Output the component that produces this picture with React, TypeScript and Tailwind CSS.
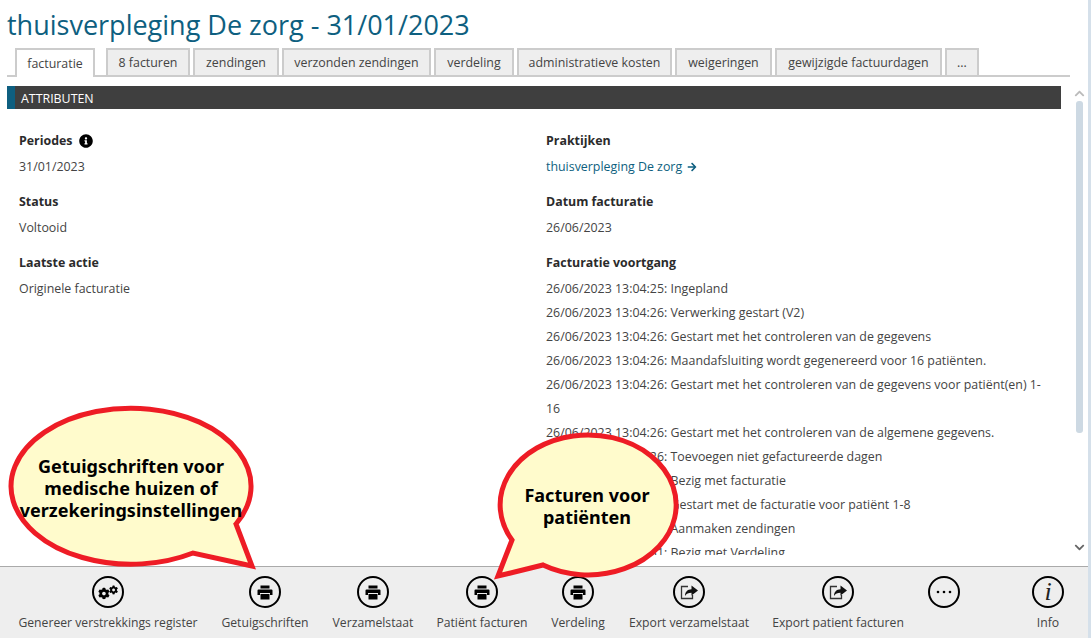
import { FaCog, FaInfoCircle, FaArrowRight, FaChevronUp, FaChevronDown } from 'react-icons/fa';

const tabs = [
  { label: '8 facturen', width: 'w-[84px]' },
  { label: 'zendingen', width: 'w-[86px]' },
  { label: 'verzonden zendingen', width: 'w-[149px]' },
  { label: 'verdeling', width: 'w-[80px]' },
  { label: 'administratieve kosten', width: 'w-[155px]' },
  { label: 'weigeringen', width: 'w-[97px]' },
  { label: 'gewijzigde factuurdagen', width: 'w-[167px]' },
  { label: '...', width: 'w-[34px]' },
];

const logLines = [
  '26/06/2023 13:04:25: Ingepland',
  '26/06/2023 13:04:26: Verwerking gestart (V2)',
  '26/06/2023 13:04:26: Gestart met het controleren van de gegevens',
  '26/06/2023 13:04:26: Maandafsluiting wordt gegenereerd voor 16 patiënten.',
  '26/06/2023 13:04:26: Gestart met het controleren van de gegevens voor patiënt(en) 1-16',
  '26/06/2023 13:04:26: Gestart met het controleren van de algemene gegevens.',
  '26/06/2023 13:04:26: Toevoegen niet gefactureerde dagen',
  '26/06/2023 13:04:26: Bezig met facturatie',
  '26/06/2023 13:04:26: Gestart met de facturatie voor patiënt 1-8',
  '26/06/2023 13:04:26: Aanmaken zendingen',
  '26/06/2023 13:04:31: Bezig met Verdeling',
];

const Field = ({ label, children }: { label: React.ReactNode; children: React.ReactNode }) => (
  <div className="mb-[11px]">
    <div className="h-[24px] font-bold leading-[24px] text-[#2b2b2b]">{label}</div>
    <div className="mt-[2px] leading-[24px]">{children}</div>
  </div>
);

const Action = ({ icon, label, width }: { icon: React.ReactNode; label: string; width: string }) => (
  <div className={`flex shrink-0 flex-col items-center ${width}`}>
    <div className="flex h-[32px] w-[32px] items-center justify-center rounded-full border-2 border-black text-black">
      {icon}
    </div>
    <div className="mt-[6px] h-[18px] whitespace-nowrap text-[12.2px] leading-[18px] text-[#444]">{label}</div>
  </div>
);

const GearsIcon = () => (
  <div className="flex h-[16px] w-[20px] items-end">
    <FaCog size={13} />
    <FaCog size={10} className="mb-[5px] ml-[-1px]" />
  </div>
);

const PrintIcon = () => (
  <svg width="16" height="15" viewBox="0 0 16 15" fill="currentColor">
    <rect x="3.5" y="0.5" width="9" height="3" />
    <path d="M1.5 4.5h13a1 1 0 0 1 1 1V10h-2.5V8h-10v2H.5V5.500a1 1 0 0 1 1-1z" />
    <rect x="3.5" y="9" width="9" height="5.500" />
  </svg>
);

const ExportIcon = () => (
  <svg width="19" height="16" viewBox="0 0 19 16">
    <path d="M8 2.500H1.500v12h11V11" fill="none" stroke="#333" strokeWidth="1.300" />
    <path d="M11.500 1.500L18 6.500l-6.500 5V8.800C8.500 8.800 6.300 9.500 5 12c0-4 2.500-6.600 6.500-6.700z" fill="#111" />
  </svg>
);

const DotsIcon = () => (
  <svg width="18" height="4" viewBox="0 0 18 4" fill="currentColor">
    <circle cx="3" cy="2" r="1.300" />
    <circle cx="9" cy="2" r="1.300" />
    <circle cx="15" cy="2" r="1.300" />
  </svg>
);

const InfoIcon = () => (
  <span className="font-['Liberation_Serif',serif] text-[26px] font-normal italic leading-[28px] text-[#222]">i</span>
);

const Bubble = ({ className, path, viewBox, children, textClass }: {
  className: string;
  path: string;
  viewBox: string;
  children: React.ReactNode;
  textClass: string;
}) => (
  <div className={`absolute ${className}`}>
    <svg className="h-full w-full" viewBox={viewBox}>
      <path d={path} fill="#fffbcc" stroke="#ee1c25" strokeWidth="5" strokeLinejoin="miter" />
    </svg>
    <div className={`absolute text-center font-['Noto_Sans',sans-serif] text-[18px] font-bold leading-[22px] text-black ${textClass}`}>
      {children}
    </div>
  </div>
);

export default function App() {
  return (
    <div className="relative flex h-[638px] w-[1091px] flex-col overflow-hidden bg-white font-['Open_Sans',sans-serif] text-[12.4px] text-[#444]">
      <div className="flex min-h-0 flex-1 flex-col pl-[7px] pr-[4px]">
        <h1 className="h-[49px] pt-[6px] text-[27px] font-normal leading-[38px] text-[#0e5f80]">
          thuisverpleging De zorg - 31/01/2023
        </h1>
        <div className="flex h-[28px] w-[1063px] items-end gap-[3px] border-b-2 border-[#ccc] pl-[8px]">
          <div className="relative top-[2px] mr-[8px] flex h-[29px] w-[80px] items-center justify-center border-2 border-b-0 border-[#ccc] bg-white pt-[2px] text-[#444]">
            facturatie
          </div>
          {tabs.map((tab) => (
            <div
              key={tab.label}
              className={`flex h-[27px] items-center justify-center border-2 border-b-0 border-[#ccc] bg-[#eee] pt-[2px] ${tab.width}`}
            >
              {tab.label}
            </div>
          ))}
        </div>
        <div className="mt-[9px] flex min-h-0 flex-1 pb-[9px]">
          <div className="min-w-0 flex-1">
            <div className="flex h-[23px] w-[1054px] items-center border-l-[8px] border-[#0e5f80] bg-[#3f3f3f] pl-[6px] pt-[3px] text-white">
              ATTRIBUTEN
            </div>
            <div className="flex h-[446px] overflow-hidden pl-[12px] pt-[20px]">
              <div className="w-[527px] shrink-0">
                <Field label={<span className="flex items-center gap-[6px]">Periodes <FaInfoCircle size={14} className="text-black" /></span>}>31/01/2023</Field>
                <Field label="Status">Voltooid</Field>
                <Field label="Laatste actie">Originele facturatie</Field>
              </div>
              <div className="w-[500px] shrink-0">
                <Field label="Praktijken">
                  <span className="flex items-center gap-[5px] text-[#0e5f80]">
                    thuisverpleging De zorg <FaArrowRight size={10} />
                  </span>
                </Field>
                <Field label="Datum facturatie">26/06/2023</Field>
                <div className="h-[24px] font-bold leading-[24px] text-[#2b2b2b]">Facturatie voortgang</div>
                <div className="mt-[2px] leading-[24px]">
                  {logLines.map((line) => (
                    <div key={line}>{line}</div>
                  ))}
                </div>
              </div>
            </div>
          </div>
          <div className="flex w-[15px] shrink-0 flex-col items-center">
            <FaChevronUp size={11} className="mt-[2px] text-[#bbb]" />
            <div className="mt-[2px] h-[332px] w-[7px] rounded-[3px] bg-[#cdd9e3]" />
            <div className="flex-1" />
            <FaChevronDown size={11} className="mb-[4px] text-[#666]" />
          </div>
        </div>
      </div>

      <div className="flex h-[72px] shrink-0 border-t border-[#aaa] bg-[#eee] pt-[9px]">
        <Action icon={<GearsIcon />} label="Genereer verstrekkings register" width="w-[216px]" />
        <Action icon={<PrintIcon />} label="Getuigschriften" width="w-[98px]" />
        <Action icon={<PrintIcon />} label="Verzamelstaat" width="w-[118px]" />
        <Action icon={<PrintIcon />} label="Patiënt facturen" width="w-[100px]" />
        <Action icon={<PrintIcon />} label="Verdeling" width="w-[92px]" />
        <Action icon={<ExportIcon />} label="Export verzamelstaat" width="w-[130px]" />
        <Action icon={<ExportIcon />} label="Export patient facturen" width="w-[168px]" />
        <Action icon={<DotsIcon />} label="" width="w-[44px]" />
        <Action icon={<InfoIcon />} label="Info" width="w-[164px]" />
      </div>

      <Bubble
        className="left-[3px] top-[399px] h-[175px] w-[260px]"
        viewBox="0 0 260 175"
        path="M233 125 A120 78 0 1 0 190 154 L249 167 Z"
        textClass="left-[8px] top-[56px] w-[240px]"
      >
        Getuigschriften voor<br />medische huizen of<br />verzekeringsinstellingen
      </Bubble>
      <Bubble
        className="left-[490px] top-[425px] h-[160px] w-[195px]"
        viewBox="0 0 195 160"
        path="M22 115 A88 70 0 1 1 53 140 L8 151 Z"
        textClass="left-0 top-[59px] w-[194px]"
      >
        Facturen voor<br />patiënten
      </Bubble>
      <div className="absolute right-0 top-0 h-[638px] w-[3px] bg-[#d5e0ea]" />
    </div>
  );
}
